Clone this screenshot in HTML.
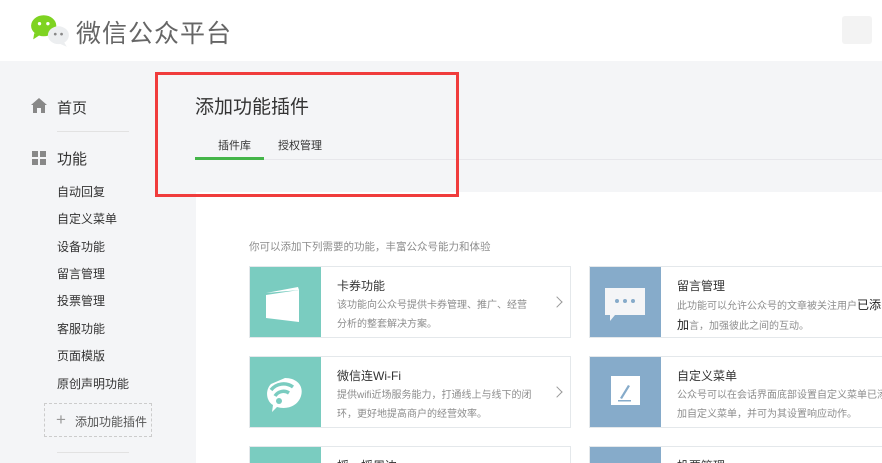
<!DOCTYPE html>
<html style="width:882px;height:463px;overflow:hidden"><head><meta charset="utf-8"><style>
*{margin:0;padding:0;box-sizing:border-box}
body{width:882px;height:463px;overflow:hidden;background:#f4f5f7;font-family:"Liberation Sans","Noto Sans CJK SC",sans-serif;position:relative;color:#333}
.a{position:absolute}
.hdr{left:0;top:0;width:882px;height:61px;background:#fff}
.panel{left:196px;top:192px;width:686px;height:271px;background:#fff}
.side{font-size:12px;color:#333}
.card{position:absolute;width:322px;height:72px;background:#fff;border:1px solid #e4e8eb;overflow:hidden}
.ic{position:absolute;left:-1px;top:-1px;width:72px;height:72px}
.t{position:absolute;left:87px;top:10px;font-size:12px;color:#333}
.d{position:absolute;left:87px;top:29px;font-size:10px;color:#8d8d8d;line-height:19px;width:196px}
.arr{position:absolute;left:303px;top:31px;width:8px;height:8px;border-right:1px solid #999;border-top:1px solid #999;transform:rotate(45deg)}
.wrap{position:absolute;left:0;top:0;width:882px;height:463px;overflow:hidden}
</style></head><body><div class="wrap">
<div class="a hdr"></div>
<svg class="a" style="left:29px;top:13px" width="42" height="36" viewBox="0 0 40 34">
<ellipse cx="14" cy="12" rx="12" ry="10" fill="#7ed321"/><path d="M5 19 L4 25 L10 21Z" fill="#7ed321"/>
<circle cx="10" cy="10" r="1.6" fill="#fff"/><circle cx="18" cy="10" r="1.6" fill="#fff"/>
<ellipse cx="28" cy="21" rx="10" ry="8.5" fill="#eceef0"/><path d="M33 27 L36 32 L29 29Z" fill="#eceef0"/>
<circle cx="25" cy="20" r="1.3" fill="#888"/><circle cx="31" cy="20" r="1.3" fill="#888"/></svg>
<div class="a" style="left:76px;top:14px;font-size:25px;color:#666;letter-spacing:1px">微信公众平台</div>
<div class="a" style="left:842px;top:16px;width:30px;height:28px;background:#f3f3f3;border-radius:3px"></div>

<svg class="a" style="left:31px;top:98px" width="16" height="15" viewBox="0 0 16 15"><path d="M8 0 L16 7 H14 V15 H10 V10 H6 V15 H2 V7 H0Z" fill="#888"/></svg>
<div class="a" style="left:57px;top:97px;font-size:15px;color:#333">首页</div>
<div class="a" style="left:57px;top:131px;width:72px;height:1px;background:#e2e2e2"></div>
<svg class="a" style="left:32px;top:151px" width="14" height="14"><rect width="6" height="6" fill="#888"/><rect x="8" width="6" height="6" fill="#888"/><rect y="8" width="6" height="6" fill="#888"/><rect x="8" y="8" width="6" height="6" fill="#888"/></svg>
<div class="a" style="left:57px;top:148px;font-size:15px;color:#333">功能</div>
<div class="a side" style="left:57px;top:183px">自动回复</div>
<div class="a side" style="left:57px;top:210px">自定义菜单</div>
<div class="a side" style="left:57px;top:238px">设备功能</div>
<div class="a side" style="left:57px;top:265px">留言管理</div>
<div class="a side" style="left:57px;top:292px">投票管理</div>
<div class="a side" style="left:57px;top:320px">客服功能</div>
<div class="a side" style="left:57px;top:347px">页面模版</div>
<div class="a side" style="left:57px;top:375px">原创声明功能</div>
<div class="a" style="left:44px;top:403px;width:108px;height:34px;border:1px dashed #ccc"></div>
<div class="a" style="left:56px;top:410px;font-size:17px;color:#999">+</div>
<div class="a side" style="left:75px;top:413px;color:#555">添加功能插件</div>
<div class="a" style="left:57px;top:452px;width:72px;height:1px;background:#e2e2e2"></div>

<div class="a panel"></div>
<div class="a" style="left:195px;top:92px;font-size:19px;color:#333">添加功能插件</div>
<div class="a" style="left:195px;top:159px;width:687px;height:1px;background:#e7e7eb"></div>
<div class="a" style="left:195px;top:157px;width:69px;height:3px;background:#44b549"></div>
<div class="a" style="left:218px;top:137px;font-size:11px;color:#333">插件库</div>
<div class="a" style="left:278px;top:137px;font-size:11px;color:#333">授权管理</div>
<div class="a" style="left:155px;top:72px;width:304px;height:125px;border:3.5px solid #f03c3c"></div>

<div class="a" style="left:249px;top:239px;font-size:10.5px;color:#8d8d8d">你可以添加下列需要的功能，丰富公众号能力和体验</div>

<div class="card" style="left:249px;top:266px"><div class="ic" style="background:#7accc0">
<svg width="72" height="72"><path d="M17 29 L50 24 L50 56 L17 52Z" fill="#fff"/><path d="M17 27 L49 21 L50 24Z" fill="#fff"/></svg></div>
<div class="t">卡券功能</div><div class="d">该功能向公众号提供卡券管理、推广、经营分析的整套解决方案。</div><div class="arr"></div></div>

<div class="card" style="left:589px;top:266px;width:300px"><div class="ic" style="background:#86abca">
<svg width="72" height="72"><path d="M16 22 H56 V49 H26 L21 55 V49 H16Z" fill="#f4f5f7"/><circle cx="28" cy="35" r="2" fill="#86abca"/><circle cx="36" cy="35" r="2" fill="#86abca"/><circle cx="44" cy="35" r="2" fill="#86abca"/></svg></div>
<div class="t">留言管理</div><div class="d" style="width:215px">此功能可以允许公众号的文章被关注用户<span style="color:#222;font-size:12px">已添加</span>言，加强彼此之间的互动。</div></div>

<div class="card" style="left:249px;top:356px"><div class="ic" style="background:#7accc0">
<svg width="72" height="72"><path d="M36 22 C48 22 55 30 52 40 C49 50 38 54 28 51 L23 56 L24 49 C17 45 16 34 22 28" fill="#fff"/>
<path d="M22 34 A16 16 0 0 1 44 31" stroke="#7accc0" stroke-width="3.5" fill="none"/><path d="M26 40 A10 10 0 0 1 40 37" stroke="#7accc0" stroke-width="3.5" fill="none"/><circle cx="30" cy="45" r="3" fill="#7accc0"/></svg></div>
<div class="t">微信连Wi-Fi</div><div class="d">提供wifi近场服务能力，打通线上与线下的闭环，更好地提高商户的经营效率。</div><div class="arr"></div></div>

<div class="card" style="left:589px;top:356px;width:300px"><div class="ic" style="background:#86abca">
<svg width="72" height="72"><rect x="22" y="20" width="29" height="29" fill="#fff"/><path d="M31 42 L39 29 L41 30 L33 43Z" fill="#86abca"/><rect x="29" y="44" width="13" height="1.5" fill="#86abca"/></svg></div>
<div class="t">自定义菜单</div><div class="d" style="width:215px">公众号可以在会话界面底部设置自定义菜单已添加自定义菜单，并可为其设置响应动作。</div></div>

<div class="card" style="left:249px;top:446px"><div class="ic" style="background:#7accc0"></div><div class="t">摇一摇周边</div></div>
<div class="card" style="left:589px;top:446px;width:300px"><div class="ic" style="background:#86abca"></div><div class="t">投票管理</div></div>
</div></body></html>
